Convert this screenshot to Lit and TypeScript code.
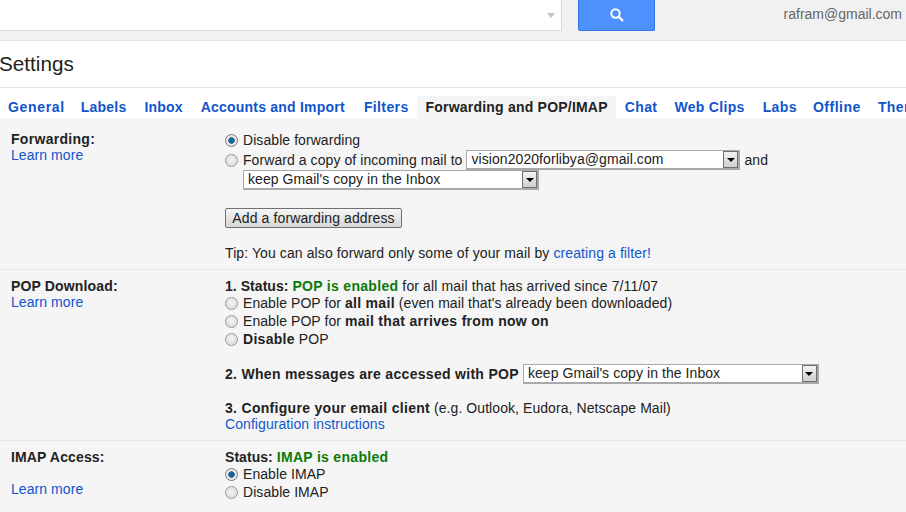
import { LitElement, html, css } from "lit";
import { customElement } from "lit/decorators.js";

const radio = (on = false) => html`<span class="radio ${on ? "on" : ""}"></span>`;
const sel = (text: string, cls: string) => html`<span class="sel ${cls}"><span class="val">${text}</span><span class="btn"><i></i></span></span>`;

type Tab = [string, number, number];
const before: Tab[] = [["General", 0.67, 0], ["Labels", 0.21, -1], ["Inbox", 0.18, 1], ["Accounts and Import", 0.22, 1], ["Filters", 0.38, 2]];
const after: Tab[] = [["Chat", 0.38, 0], ["Web Clips", 0.32, 0], ["Labs", 0.38, 1], ["Offline", 0.52, -1], ["Themes", 0.38, 0]];
const tab = ([t, ls, shift]: Tab) => html`<a class="tab" style="letter-spacing:${ls}px;margin-left:${shift}px">${t}</a>`;

@customElement("app-root")
export class AppRoot extends LitElement {
  static styles = css`
    :host { display: block; width: 906px; height: 512px; overflow: hidden; background: #fff;
      font-family: "Liberation Sans", Arial, sans-serif; font-size: 14px; color: #222; letter-spacing: 0.07px; }
    a { color: #15c; text-decoration: none; }
    .top { height: 40px; background: #f1f1f1; border-bottom: 1px solid #e5e5e5; display: flex; align-items: flex-start; letter-spacing: 0; }
    .search { width: 555px; height: 30px; background: #fff; border: solid #d9d9d9; border-width: 0 1px 1px 0; display: flex; align-items: center; justify-content: flex-end; padding-right: 6px; }
    .caret { width: 0; height: 0; border: 4px solid transparent; border-top: 5px solid #c4c4c4; border-bottom: 0; margin-top: 1px; }
    .go { width: 75px; height: 30px; margin-left: 16px; background: #4d90fe; border: solid #3079ed; border-width: 0 1px 1px 1px; border-radius: 0 0 2px 2px; display: flex; align-items: center; justify-content: center; }
    .me { margin-left: auto; margin-right: 4px; color: #666; line-height: 28px; }
    .title { height: 46px; display: flex; align-items: center; font-size: 20.7px; letter-spacing: 0; margin-left: -1px; border-bottom: 1px solid #e5e5e5; color: #222; }
    .tabs { height: 30px; display: flex; align-items: flex-end; margin-left: -1px; white-space: nowrap; }
    .tab { height: 22px; line-height: 23px; padding: 0 8px 0 9px; font-weight: bold; color: #15c; flex: none; }
    .tab.cur { background: #f5f5f5; color: #222; letter-spacing: 0.21px; }
    .panel { background: #f5f5f5; height: 394px; }
    .row { display: flex; border-bottom: 1px solid #e5e5e5; padding: 8px 0; line-height: 16px; }
    .row.first { padding: 13px 0 7px; }
    .row.last { border-bottom: 0; }
    .label { width: 225px; padding-left: 11px; box-sizing: border-box; flex: none; }
    .label b, .value b { letter-spacing: 0.3px; }
    .label b.tight { letter-spacing: 0.15px; }
    .value b.st { letter-spacing: 0.05px; }
    .wide { letter-spacing: 0.13px; }
    .label .gap { height: 16px; }
    .label a { display: block; }
    .value { flex: 1; }
    .line { height: 18px; display: flex; align-items: center; white-space: pre; }
    .text { height: 16px; line-height: 16px; white-space: pre; }
    .radio { width: 13px; height: 13px; border-radius: 50%; margin: 0 5px 0 0; flex: none; box-sizing: border-box; border: 1px solid #979797;
      background: radial-gradient(circle at 50% 45%, #efefef 25%, #cdcdcd 85%); box-shadow: inset 0 0 0 1px rgba(255, 255, 255, 0.4); }
    .radio.on { border-color: #7a7a7a; background: radial-gradient(circle, #0d6aa3 0 2.3px, #2f5f80 2.9px, #e8e8e8 3.6px, #cdcdcd 100%); }
    .sel { display: inline-flex; height: 20px; box-sizing: border-box; border: 2px solid #a9a9a9; border-width: 1px 2px 2px 1px; background: #fff; align-items: stretch; color: #222; flex: none; }
    .val { flex: 1; padding-left: 4px; line-height: 17px; }
    .btn { width: 15px; border: 1px solid #707070; background: linear-gradient(#f2f2f2, #cfcfcf); display: flex; align-items: center; justify-content: center; box-sizing: border-box; }
    .btn i { width: 0; height: 0; border: 4px solid transparent; border-top: 4px solid #000; border-bottom: 0; }
    .s1 { width: 274px; margin-left: 4px; }
    .s2 { width: 296px; margin-left: 18px; }
    .s3 { width: 296px; margin-left: 4px; }
    .selrow { height: 20px; display: flex; align-items: center; white-space: pre; }
    .mt1 { margin-top: 1px; }
    .push { margin-top: 18px; }
    .add { display: block; width: 177px; height: 20px; padding: 0; box-sizing: border-box; border: 1px solid #707070; border-radius: 2px; background: linear-gradient(#f6f6f6, #d6d6d6); font: inherit; letter-spacing: 0.12px; color: #222; line-height: 17px; text-align: center; }
    .tip { margin-top: 16px; height: 18px; line-height: 18px; letter-spacing: 0.1px; }
    .m16 { margin-top: 16px; }
    .green { color: #0a7a0a; font-weight: bold; letter-spacing: 0.3px; }
  `;

  render() {
    return html`
      <div class="top">
        <div class="search"><span class="caret"></span></div>
        <div class="go">
          <svg width="16" height="16" viewBox="0 0 16 16" fill="none" stroke="#fff"><circle cx="6.5" cy="6.5" r="4.2" stroke-width="2"></circle><path d="M9.8 9.8 14 14" stroke-width="2.4"></path></svg>
        </div>
        <div class="me">rafram@gmail.com</div>
      </div>
      <div class="title">Settings</div>
      <div class="tabs">
        ${before.map(tab)}
        <span class="tab cur">Forwarding and POP/IMAP</span>
        ${after.map(tab)}
      </div>
      <div class="panel">
        <div class="row first">
          <div class="label"><b>Forwarding:</b><a>Learn more</a></div>
          <div class="value">
            <div class="line">${radio(true)}Disable forwarding</div>
            <div class="selrow mt1">${radio()}Forward a copy of incoming mail to${sel("vision2020forlibya@gmail.com", "s1")} and</div>
            <div class="selrow">${sel("keep Gmail's copy in the Inbox", "s2")}</div>
            <button class="add push">Add a forwarding address</button>
            <div class="tip">Tip: You can also forward only some of your mail by <a>creating a filter!</a></div>
          </div>
        </div>
        <div class="row">
          <div class="label"><b class="tight">POP Download:</b><a>Learn more</a></div>
          <div class="value">
            <div class="text"><b class="st">1. Status: </b><span class="green">POP is enabled</span><span class="wide"> for all mail that has arrived since 7/11/07</span></div>
            <div class="line">${radio()}Enable POP for <b>all mail</b> (even mail that's already been downloaded)</div>
            <div class="line">${radio()}Enable POP for <b>mail that arrives from now on</b></div>
            <div class="line">${radio()}<b>Disable</b> POP</div>
            <div class="selrow m16"><b>2. When messages are accessed with POP</b>${sel("keep Gmail's copy in the Inbox", "s3")}</div>
            <div class="text m16"><b>3. Configure your email client</b> (e.g. Outlook, Eudora, Netscape Mail)</div>
            <div class="text"><a>Configuration instructions</a></div>
          </div>
        </div>
        <div class="row last">
          <div class="label"><b class="tight">IMAP Access:</b><div class="gap"></div><a>Learn more</a></div>
          <div class="value">
            <div class="text"><b class="st">Status: </b><span class="green">IMAP is enabled</span></div>
            <div class="line">${radio(true)}Enable IMAP</div>
            <div class="line">${radio()}Disable IMAP</div>
          </div>
        </div>
      </div>
    `;
  }
}
